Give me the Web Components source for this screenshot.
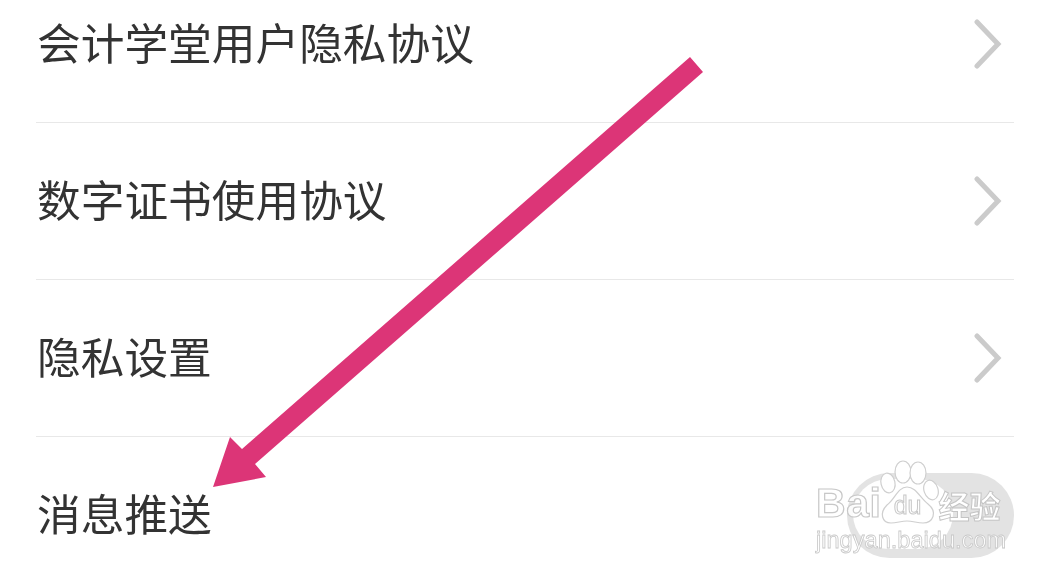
<!DOCTYPE html>
<html>
<head>
<meta charset="utf-8">
<style>
    html, body { margin: 0; padding: 0; background: #fff; }
    body { width: 1064px; height: 575px; overflow: hidden; position: relative; }
</style>
</head>
<body>
<settings-list>
    <settings-row>会计学堂用户隐私协议<chevron-icon slot="end"></chevron-icon></settings-row>
    <settings-row>数字证书使用协议<chevron-icon slot="end"></chevron-icon></settings-row>
    <settings-row>隐私设置<chevron-icon slot="end"></chevron-icon></settings-row>
    <settings-row last>消息推送<toggle-switch slot="end"></toggle-switch></settings-row>
</settings-list>
<pointer-arrow></pointer-arrow>
<baidu-watermark></baidu-watermark>
<script>
class SettingsList extends HTMLElement {
    constructor() {
        super();
        this.attachShadow({ mode: "open" });
    }

    connectedCallback() {
        this.shadowRoot.innerHTML = `
            <style>
                :host {
                    display: flex;
                    flex-direction: column;
                    margin: -34px 50px 0 36px;
                }
            </style>
            <slot></slot>
        `;
    }
}

class SettingsRow extends HTMLElement {
    constructor() {
        super();
        this.attachShadow({ mode: "open" });
    }

    connectedCallback() {
        this.shadowRoot.innerHTML = `
            <style>
                :host {
                    display: flex;
                    align-items: center;
                    justify-content: space-between;
                    height: 156px;
                    border-bottom: 1px solid #e8e8e8;
                    font-family: "Noto Sans CJK SC", "Liberation Sans", sans-serif;
                    font-size: 43.7px;
                    color: #333;
                }
                :host([last]) { border-bottom: none; }
                .label { padding: 0 0 6px 1px; will-change: transform; }
            </style>
            <span class="label"><slot></slot></span>
            <slot name="end"></slot>
        `;
    }
}

class ChevronIcon extends HTMLElement {
    constructor() {
        super();
        this.attachShadow({ mode: "open" });
    }

    connectedCallback() {
        this.shadowRoot.innerHTML = `
            <style>
                :host { display: block; width: 30px; height: 50px; margin-right: 10px; }
                svg { display: block; }
            </style>
            <svg width="30" height="50" viewBox="0 0 30 50">
                <path d="M3 3L24 25L3 47" fill="none" stroke="#cbcbcb" stroke-width="5" stroke-linecap="round" stroke-linejoin="miter"/>
            </svg>
        `;
    }
}

class ToggleSwitch extends HTMLElement {
    constructor() {
        super();
        this.attachShadow({ mode: "open" });
    }

    connectedCallback() {
        this.shadowRoot.innerHTML = `
            <style>
                :host {
                    display: flex;
                    box-sizing: border-box;
                    width: 167px;
                    height: 85px;
                    padding: 6px 6px 9px;
                    border-radius: 43px;
                    background: #e3e3e3;
                }
                .knob {
                    width: 100px;
                    height: 70px;
                    border-radius: 35px;
                    background: #fff;
                }
            </style>
            <div class="knob"></div>
        `;
    }
}

class PointerArrow extends HTMLElement {
    constructor() {
        super();
        this.attachShadow({ mode: "open" });
    }

    connectedCallback() {
        this.shadowRoot.innerHTML = `
            <style>
                :host { position: absolute; left: 0; top: 0; width: 1064px; height: 575px; pointer-events: none; }
                svg { display: block; }
            </style>
            <svg width="1064" height="575" viewBox="0 0 1064 575">
                <polygon fill="#dc3577" points="690,57 703,72 255,464 266,477 213,487 230,437 242,449"/>
            </svg>
        `;
    }
}

class BaiduWatermark extends HTMLElement {
    constructor() {
        super();
        this.attachShadow({ mode: "open" });
    }

    connectedCallback() {
        this.shadowRoot.innerHTML = `
            <style>
                :host {
                    position: absolute;
                    left: 816px;
                    top: 458px;
                    width: 196px;
                    height: 100px;
                    display: flex;
                    flex-direction: column;
                    align-items: flex-start;
                    color: rgba(255, 255, 255, .85);
                    font-family: "Liberation Sans", sans-serif;
                    -webkit-text-stroke: 1px #c8c8c8;
                    pointer-events: none;
                    will-change: transform;
                }
                .top { display: flex; align-items: flex-end; height: 66px; }
                .bai { font-size: 41px; font-weight: 700; line-height: 36px; margin-bottom: 3px; letter-spacing: .6px; -webkit-text-stroke: 1.2px #c8c8c8; }
                .paw { position: relative; width: 62px; height: 66px; margin-left: -5px; flex: none; }
                .paw svg { display: block; }
                .du {
                    position: absolute;
                    left: 9px;
                    bottom: 5px;
                    width: 44px;
                    text-align: center;
                    font-size: 25px;
                    line-height: 28px;
                    font-weight: 400;
                    color: #fff;
                }
                .jy {
                    font-family: "Noto Sans CJK SC", sans-serif;
                    font-size: 31px;
                    font-weight: 700;
                    line-height: 36px;
                    margin-bottom: 1px;
                    color: #fff;
                    -webkit-text-stroke: 1px #c4c4c4;
                }
                .url { font-size: 23.6px; line-height: 28px; margin-top: 2px; white-space: nowrap; -webkit-text-stroke: .8px #c8c8c8; }
            </style>
            <div class="top">
                <span class="bai">Bai</span>
                <div class="paw">
                    <svg width="62" height="66" viewBox="0 0 62 66">
                        <g fill="#fff" stroke="#cfcfcf" stroke-width="1.2">
                            <ellipse cx="11" cy="25" rx="7" ry="10" transform="rotate(-12 11 25)"/>
                            <ellipse cx="26" cy="14" rx="8" ry="11"/>
                            <ellipse cx="41" cy="15" rx="8" ry="11"/>
                            <ellipse cx="54" cy="32" rx="7" ry="10" transform="rotate(-18 54 32)"/>
                            <path d="M30 29C39 29 43 40 51 46C61 54 56 65 46 65C40 65 36 63 30 63C24 63 20 65 14 65C5 65 2 55 10 47C18 41 21 29 30 29Z"/>
                        </g>
                    </svg>
                    <span class="du">du</span>
                </div>
                <span class="jy">经验</span>
            </div>
            <div class="url">jingyan.baidu.com</div>
        `;
    }
}

customElements.define("settings-list", SettingsList);
customElements.define("settings-row", SettingsRow);
customElements.define("chevron-icon", ChevronIcon);
customElements.define("toggle-switch", ToggleSwitch);
customElements.define("pointer-arrow", PointerArrow);
customElements.define("baidu-watermark", BaiduWatermark);
</script>
</body>
</html>
